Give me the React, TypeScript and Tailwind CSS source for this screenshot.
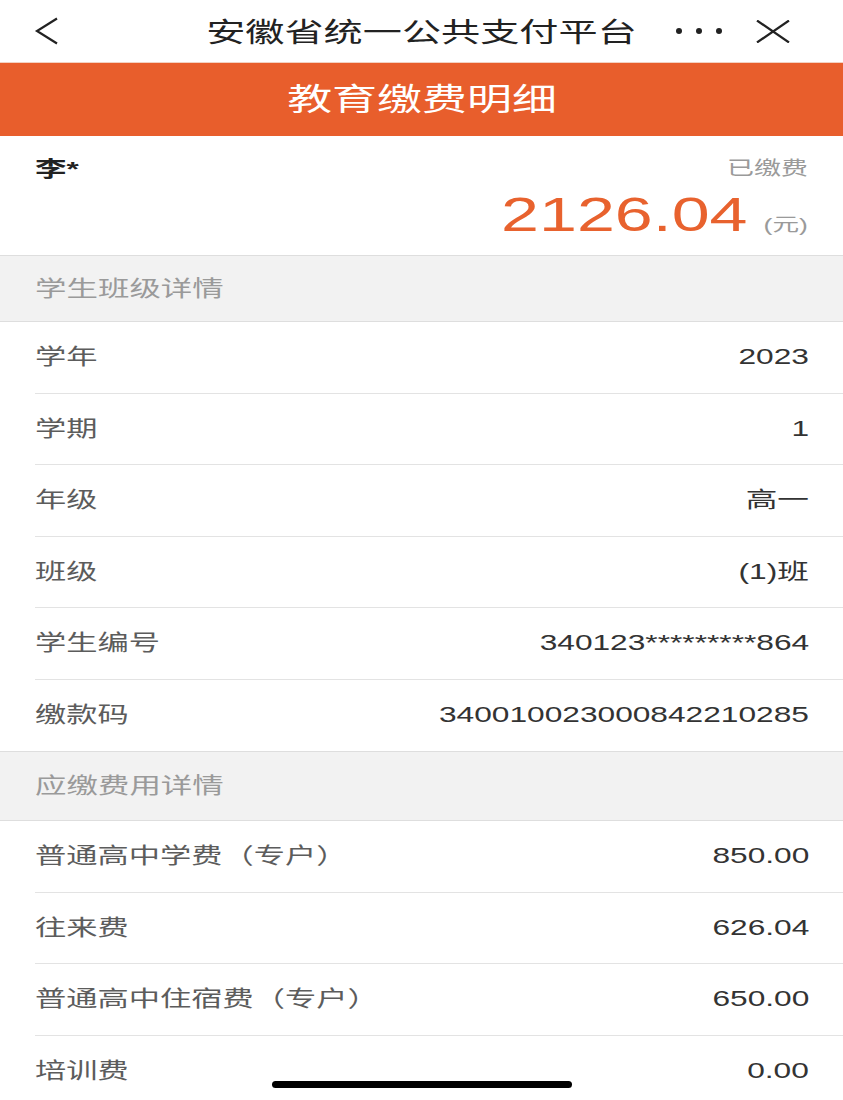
import React from "react";

const font = { fontFamily: '"Liberation Sans", "Noto Sans CJK SC", sans-serif' };

function Row({ label, value, last }: { label: string; value: string; last?: boolean }) {
  return (
    <div className="pl-[35px]">
      <div
        className={`h-[71.5px] flex items-center justify-between pr-[34px] ${last ? "" : "border-b border-[#e3e3e3]"}`}
      >
        <span className="inline-block origin-left scale-x-[1.42] text-[22px] text-[#5c5c5c] leading-none whitespace-nowrap">
          {label}
        </span>
        <span className="inline-block origin-right scale-x-[1.44] text-[22px] text-[#333] leading-none whitespace-nowrap">
          {value}
        </span>
      </div>
    </div>
  );
}

function SectionHeader({ title, h }: { title: string; h: string }) {
  return (
    <div className={`${h} bg-[#f2f2f2] border-t border-b border-[#dedede] flex items-center px-[35px]`}>
      <span className="inline-block origin-left scale-x-[1.43] text-[22px] text-[#9a9a9a] leading-none">{title}</span>
    </div>
  );
}

export default function App() {
  return (
    <div className="relative w-[843px] h-[1100px] overflow-hidden bg-white" style={font}>
      {/* nav bar */}
      <div className="h-[63px] border-b border-[#f3d2c2] flex items-center justify-between pl-[33px] pr-[53px] relative">
        <svg width="26" height="28" viewBox="0 0 26 28" preserveAspectRatio="none" className="ml-[1px]">
          <path d="M23 1.5 L3 14 L23 26.5" fill="none" stroke="#222" strokeWidth="2.2" strokeLinejoin="miter" />
        </svg>
        <div className="absolute inset-x-0 top-[16px] flex justify-center pointer-events-none">
          <span className="inline-block origin-center scale-x-[1.45] text-[27px] text-[#222] leading-[34px]">
            安徽省统一公共支付平台
          </span>
        </div>
        <div className="flex items-center gap-[34px]">
          <div className="flex gap-[14px]">
            <span className="w-[6px] h-[6px] rounded-full bg-[#222]" />
            <span className="w-[6px] h-[6px] rounded-full bg-[#222]" />
            <span className="w-[6px] h-[6px] rounded-full bg-[#222]" />
          </div>
          <svg width="34" height="23" viewBox="0 0 34 23" preserveAspectRatio="none">
            <path d="M1 0.5 L33 22.5 M33 0.5 L1 22.5" fill="none" stroke="#222" strokeWidth="2.2" />
          </svg>
        </div>
      </div>

      {/* orange header */}
      <div className="h-[73px] bg-[#e85e2c] flex items-center justify-center">
        <span className="inline-block origin-center scale-x-[1.45] text-[31px] text-white leading-none">教育缴费明细</span>
      </div>

      {/* name / amount */}
      <div className="h-[119px] px-[35px] pt-[18px]">
        <div className="flex justify-between items-center h-[28px]">
          <span className="inline-block origin-left scale-x-[1.5] text-[21px] text-[#222] font-semibold leading-none">
            李*
          </span>
          <span className="inline-block origin-right scale-x-[1.42] text-[19px] text-[#9a9a9a] leading-none">
            已缴费
          </span>
        </div>
        <div className="flex justify-end items-baseline mt-[8px]">
          <span className="inline-block origin-right scale-x-[1.42] text-[48px] text-[#e8622e] leading-[50px] mr-[30px]">
            2126.04
          </span>
          <span className="inline-block origin-right scale-x-[1.48] text-[18px] text-[#9a9a9a] leading-none">(元)</span>
        </div>
      </div>

      <SectionHeader title="学生班级详情" h="h-[67px]" />
      <Row label="学年" value="2023" />
      <Row label="学期" value="1" />
      <Row label="年级" value="高一" />
      <Row label="班级" value="(1)班" />
      <Row label="学生编号" value="340123*********864" />
      <Row label="缴款码" value="340010023000842210285" last />

      <SectionHeader title="应缴费用详情" h="h-[70px]" />
      <Row label="普通高中学费（专户）" value="850.00" />
      <Row label="往来费" value="626.04" />
      <Row label="普通高中住宿费（专户）" value="650.00" />
      <Row label="培训费" value="0.00" last />

      {/* home indicator */}
      <div className="absolute left-[272px] bottom-[12px] w-[300px] h-[7px] rounded-full bg-black" />
    </div>
  );
}
